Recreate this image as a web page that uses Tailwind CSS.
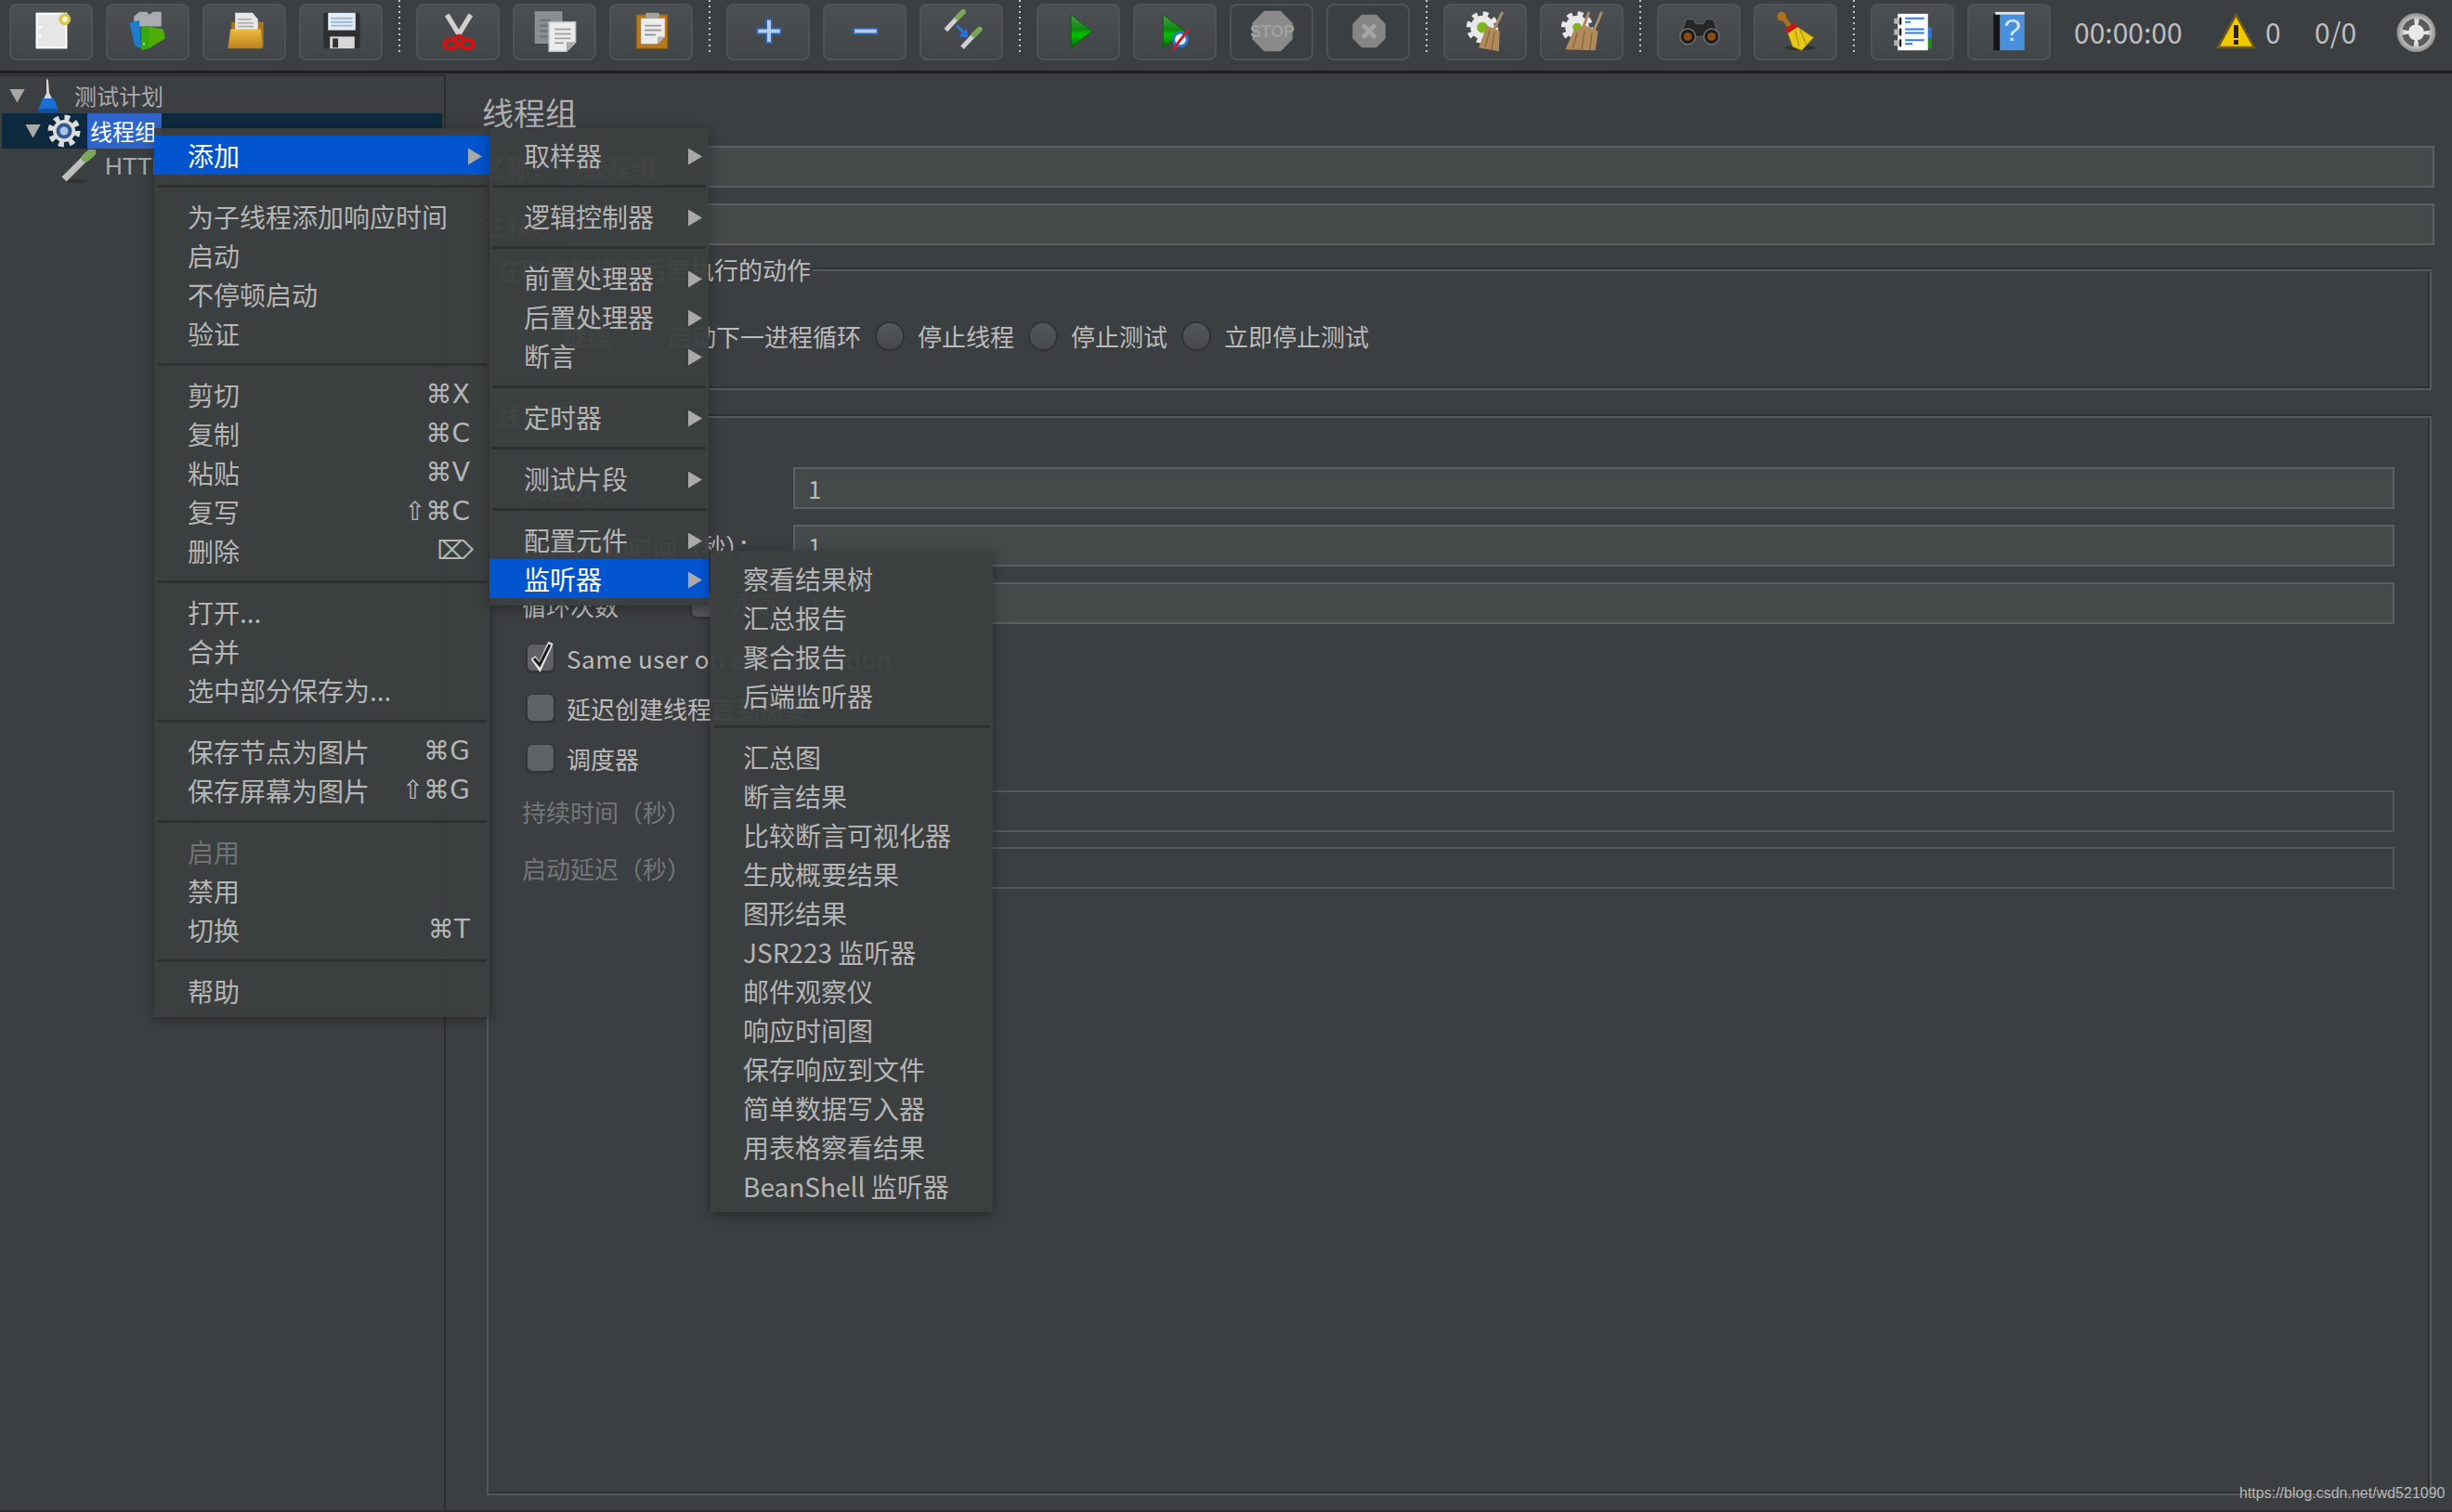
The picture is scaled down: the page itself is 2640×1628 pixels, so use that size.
<!DOCTYPE html>
<html lang="zh-CN">
<head>
<meta charset="UTF-8">
<title>Apache JMeter</title>
<script src="https://cdn.jsdelivr.net/npm/@tailwindcss/browser@4"></script>
</head>
<body class="bg-[#3c3f41]">
<div class="relative w-[2640px] h-[1628px] overflow-hidden flex flex-col bg-[#3c3f41] text-[#bbbbbb] text-[26px] border-b-2 border-[#2c2e30] font-['Noto_Sans_CJK_SC','Noto_Sans',sans-serif]">

  <svg class="absolute w-0 h-0">
    <defs>
      <linearGradient id="play" x1="0" y1="0" x2="0" y2="1"><stop offset="0" stop-color="#4f9f4f"/><stop offset="0.45" stop-color="#0a8a0a"/><stop offset="0.6" stop-color="#00c400"/><stop offset="1" stop-color="#006a00"/></linearGradient>
      <linearGradient id="folder" x1="0" y1="0" x2="0" y2="1"><stop offset="0" stop-color="#eebb44"/><stop offset="1" stop-color="#b9821c"/></linearGradient>
      <radialGradient id="ball"><stop offset="0.55" stop-color="#e8e8e8"/><stop offset="1" stop-color="#8a8a8a"/></radialGradient>
    </defs>
  </svg>

  <!-- toolbar -->
  <div class="h-[79px] shrink-0 flex items-start gap-[14px] pl-[10px] pt-[4px] border-b-[3px] border-[#1e1f20]">
    <div class="w-[90px] h-[61px] rounded-[8px] bg-linear-to-b from-[#4c5052] to-[#424547] shadow-[inset_0_0_0_2px_#505355]">
      <svg viewBox="0 0 90 62" class="w-full h-full"><rect x="29.5" y="11" width="32" height="37" fill="#e6e6e6" stroke="#fafafa" stroke-width="2.5"/><circle cx="33" cy="26" r="1.5" fill="#fff"/><circle cx="33" cy="35" r="1.5" fill="#fff"/><circle cx="60" cy="17" r="6.5" fill="#d8c850"/><circle cx="60" cy="17" r="3" fill="#fff7c0"/></svg>
    </div>
    <div class="w-[90px] h-[61px] rounded-[8px] bg-linear-to-b from-[#4c5052] to-[#424547] shadow-[inset_0_0_0_2px_#505355]">
      <svg viewBox="0 0 90 62" class="w-full h-full"><path d="M30 14l6-5h8l3 3 4-3h9v16H30z" fill="#a9adaf"/><path d="M25 21l11-3 2 31-7-3z" fill="#1b7dcc"/><path d="M38 26l8-2v25l-8 2z" fill="#35a812"/><path d="M46 25l16 3 2 10-18 11z" fill="#4fae06"/><circle cx="41" cy="44" r="1" fill="#fff"/></svg>
    </div>
    <div class="w-[90px] h-[61px] rounded-[8px] bg-linear-to-b from-[#4c5052] to-[#424547] shadow-[inset_0_0_0_2px_#505355]">
      <svg viewBox="0 0 90 62" class="w-full h-full"><path d="M31 20h35v27H31z" fill="#a9771a"/><path d="M35 10h19l6 7v14H35z" fill="#e6e6e6"/><path d="M38 17h15M38 21h17M38 25h17" stroke="#a8a8a8" stroke-width="1.5"/><path d="M30 28h33l2 21H27z" fill="url(#folder)"/></svg>
    </div>
    <div class="w-[90px] h-[61px] rounded-[8px] bg-linear-to-b from-[#4c5052] to-[#424547] shadow-[inset_0_0_0_2px_#505355]">
      <svg viewBox="0 0 90 62" class="w-full h-full"><rect x="26" y="10" width="40" height="39" rx="2" fill="#2f2f31"/><rect x="31" y="10" width="30" height="19" fill="#e4ecf5"/><path d="M34 16h24M34 20h24M34 24h24" stroke="#9db8d4" stroke-width="2"/><rect x="33" y="36" width="27" height="13" fill="#d8d8d8"/><rect x="36" y="38" width="6" height="10" fill="#333"/></svg>
    </div>
    <div class="w-[2px] h-[58px] -mt-[4px] mx-[3px] bg-[repeating-linear-gradient(to_bottom,#c4c4c4_0,#c4c4c4_2px,transparent_2px,transparent_6px)]"></div>
    <div class="w-[90px] h-[61px] rounded-[8px] bg-linear-to-b from-[#4c5052] to-[#424547] shadow-[inset_0_0_0_2px_#505355]">
      <svg viewBox="0 0 90 62" class="w-full h-full"><path d="M33 12l14 23M59 12L45 35" stroke="#cfcfcf" stroke-width="5.5"/><ellipse cx="37" cy="44" rx="7" ry="5" fill="none" stroke="#d41212" stroke-width="4.5"/><ellipse cx="55" cy="44" rx="7" ry="5" fill="none" stroke="#d41212" stroke-width="4.5"/><path d="M46 34l-7 7M46 34l7 7" stroke="#d41212" stroke-width="3.5"/></svg>
    </div>
    <div class="w-[90px] h-[61px] rounded-[8px] bg-linear-to-b from-[#4c5052] to-[#424547] shadow-[inset_0_0_0_2px_#505355]">
      <svg viewBox="0 0 90 62" class="w-full h-full"><rect x="24" y="9" width="29" height="34" fill="#8b8e90" stroke="#9a9d9f"/><path d="M29 18h12M29 24h12M29 30h12M29 36h12" stroke="#6d7072" stroke-width="2"/><path d="M39 20h29v22l-10 10H39z" fill="#ececec" stroke="#c4c4c4" stroke-width="1.5"/><path d="M58 52V42h10z" fill="#a8a8a8"/><path d="M45 28h18M45 33h18M45 38h18M45 43h10" stroke="#a5a5a5" stroke-width="2"/></svg>
    </div>
    <div class="w-[90px] h-[61px] rounded-[8px] bg-linear-to-b from-[#4c5052] to-[#424547] shadow-[inset_0_0_0_2px_#505355]">
      <svg viewBox="0 0 90 62" class="w-full h-full"><rect x="29" y="12" width="34" height="37" fill="#b57a1c" stroke="#8b5a12"/><path d="M34 16h26v20l-8 8H34z" fill="#ececec"/><path d="M52 44v-8h8z" fill="#b5b5b5"/><rect x="39" y="10" width="15" height="6" rx="2" fill="#a2a296"/><path d="M38 24h18M38 29h18M38 34h12" stroke="#9a9a9a" stroke-width="2"/></svg>
    </div>
    <div class="w-[2px] h-[58px] -mt-[4px] mx-[3px] bg-[repeating-linear-gradient(to_bottom,#c4c4c4_0,#c4c4c4_2px,transparent_2px,transparent_6px)]"></div>
    <div class="w-[90px] h-[61px] rounded-[8px] bg-linear-to-b from-[#4c5052] to-[#424547] shadow-[inset_0_0_0_2px_#505355]">
      <svg viewBox="0 0 90 62" class="w-full h-full"><path d="M42 16h8v10h10v8H50v10h-8V34H32v-8h10z" fill="#2f63a8"/><path d="M44 18h4v10h10v4H48v10h-4V32H34v-4h10z" fill="#b3cdea"/></svg>
    </div>
    <div class="w-[90px] h-[61px] rounded-[8px] bg-linear-to-b from-[#4c5052] to-[#424547] shadow-[inset_0_0_0_2px_#505355]">
      <svg viewBox="0 0 90 62" class="w-full h-full"><rect x="32" y="26" width="28" height="8" fill="#2f63a8"/><rect x="34" y="28" width="24" height="4" fill="#b3cdea"/></svg>
    </div>
    <div class="w-[90px] h-[61px] rounded-[8px] bg-linear-to-b from-[#4c5052] to-[#424547] shadow-[inset_0_0_0_2px_#505355]">
      <svg viewBox="0 0 90 62" class="w-full h-full"><path d="M28 29l13-14" stroke="#d0d0d0" stroke-width="5"/><path d="M41 15l6-6" stroke="#7aa85a" stroke-width="6" stroke-linecap="round"/><path d="M46 48l13-14" stroke="#d0d0d0" stroke-width="5"/><path d="M59 34l6-6" stroke="#7aa85a" stroke-width="6" stroke-linecap="round"/><path d="M40 24l7 7" stroke="#2a78e4" stroke-width="3"/><path d="M52 37l-10-1 9-9z" fill="#1f6fe8"/></svg>
    </div>
    <div class="w-[2px] h-[58px] -mt-[4px] mx-[3px] bg-[repeating-linear-gradient(to_bottom,#c4c4c4_0,#c4c4c4_2px,transparent_2px,transparent_6px)]"></div>
    <div class="w-[90px] h-[61px] rounded-[8px] bg-linear-to-b from-[#4c5052] to-[#424547] shadow-[inset_0_0_0_2px_#505355]">
      <svg viewBox="0 0 90 62" class="w-full h-full"><path d="M37 12l23 18-23 18z" fill="url(#play)" stroke="#0b5f0b"/></svg>
    </div>
    <div class="w-[90px] h-[61px] rounded-[8px] bg-linear-to-b from-[#4c5052] to-[#424547] shadow-[inset_0_0_0_2px_#505355]">
      <svg viewBox="0 0 90 62" class="w-full h-full"><path d="M32 12l24 18-24 18z" fill="url(#play)" stroke="#0b5f0b"/><circle cx="51" cy="39" r="7.5" fill="#f2f2f2" stroke="#2a78c8" stroke-width="3"/><path d="M43 50l17-22" stroke="#c41e2e" stroke-width="3"/></svg>
    </div>
    <div class="w-[90px] h-[61px] rounded-[8px] bg-[#3c3f41] shadow-[inset_0_0_0_2px_#505355]">
      <svg viewBox="0 0 90 62" class="w-full h-full"><path d="M37 8h18l13 13v18L55 52H37L24 39V21z" fill="#8a8a8a"/><text x="46" y="37" text-anchor="middle" font-size="18" font-weight="700" font-family="Liberation Sans" fill="#a0a0a0">STOP</text></svg>
    </div>
    <div class="w-[90px] h-[61px] rounded-[8px] bg-[#3c3f41] shadow-[inset_0_0_0_2px_#505355]">
      <svg viewBox="0 0 90 62" class="w-full h-full"><path d="M38 12h16l10 10v16L54 48H38L28 38V22z" fill="#858585"/><path d="M39 23l14 14M53 23L39 37" stroke="#a4a4a4" stroke-width="5"/></svg>
    </div>
    <div class="w-[2px] h-[58px] -mt-[4px] mx-[3px] bg-[repeating-linear-gradient(to_bottom,#c4c4c4_0,#c4c4c4_2px,transparent_2px,transparent_6px)]"></div>
    <div class="w-[90px] h-[61px] rounded-[8px] bg-linear-to-b from-[#4c5052] to-[#424547] shadow-[inset_0_0_0_2px_#505355]">
      <svg viewBox="0 0 90 62" class="w-full h-full"><circle cx="42" cy="26" r="13" fill="#e8e8e8"/><circle cx="42" cy="26" r="15" fill="none" stroke="#e8e8e8" stroke-width="5" stroke-dasharray="6 5.8"/><circle cx="42" cy="26" r="6" fill="#7ab81e"/><path d="M64 9L54 30" stroke="#a88c68" stroke-width="3"/><path d="M47 24l14 6-1 22-22-4z" fill="#b08a5a"/><path d="M50 29l-5 19M55 31l-3 20" stroke="#8c6a3e" stroke-width="1.5"/></svg>
    </div>
    <div class="w-[90px] h-[61px] rounded-[8px] bg-linear-to-b from-[#4c5052] to-[#424547] shadow-[inset_0_0_0_2px_#505355]">
      <svg viewBox="0 0 90 62" class="w-full h-full"><circle cx="40" cy="26" r="13" fill="#e8e8e8"/><circle cx="40" cy="26" r="15" fill="none" stroke="#e8e8e8" stroke-width="5" stroke-dasharray="6 5.8"/><circle cx="40" cy="26" r="5" fill="#7ab81e"/><path d="M53 9L46 28M67 9L58 30" stroke="#a88c68" stroke-width="3"/><path d="M37 28l12-4 14 6-3 21-33-1z" fill="#b08a5a"/><path d="M40 32l-5 17M48 30l-3 20M56 32l-2 19" stroke="#8c6a3e" stroke-width="1.5"/></svg>
    </div>
    <div class="w-[2px] h-[58px] -mt-[4px] mx-[3px] bg-[repeating-linear-gradient(to_bottom,#c4c4c4_0,#c4c4c4_2px,transparent_2px,transparent_6px)]"></div>
    <div class="w-[90px] h-[61px] rounded-[8px] bg-linear-to-b from-[#4c5052] to-[#424547] shadow-[inset_0_0_0_2px_#505355]">
      <svg viewBox="0 0 90 62" class="w-full h-full"><path d="M31 17h8l3 5h8l3-5h8l6 19H25z" fill="#262626" stroke="#666"/><circle cx="33" cy="36" r="8.5" fill="#1d1d1d" stroke="#707070" stroke-width="1.5"/><circle cx="59" cy="36" r="8.5" fill="#1d1d1d" stroke="#707070" stroke-width="1.5"/><circle cx="33" cy="36" r="4.5" fill="#8c4c18"/><circle cx="59" cy="36" r="4.5" fill="#8c4c18"/></svg>
    </div>
    <div class="w-[90px] h-[61px] rounded-[8px] bg-linear-to-b from-[#4c5052] to-[#424547] shadow-[inset_0_0_0_2px_#505355]">
      <svg viewBox="0 0 90 62" class="w-full h-full"><ellipse cx="50" cy="48" rx="16" ry="3" fill="#2e3032"/><path d="M30 13l9 12" stroke="#a9701f" stroke-width="5" stroke-linecap="round"/><circle cx="30" cy="14" r="5" fill="#a9701f"/><path d="M36 30l9-6 20 13-13 14-10-4z" fill="#e6c81a" stroke="#9a8414"/><path d="M45 30l4 17M50 28l7 17" stroke="#b89a10" stroke-width="1.5"/><path d="M35 30l11-7" stroke="#c81414" stroke-width="6"/></svg>
    </div>
    <div class="w-[2px] h-[58px] -mt-[4px] mx-[3px] bg-[repeating-linear-gradient(to_bottom,#c4c4c4_0,#c4c4c4_2px,transparent_2px,transparent_6px)]"></div>
    <div class="w-[90px] h-[61px] rounded-[8px] bg-linear-to-b from-[#4c5052] to-[#424547] shadow-[inset_0_0_0_2px_#505355]">
      <svg viewBox="0 0 90 62" class="w-full h-full"><rect x="62" y="26" width="4" height="12" fill="#2f78d8"/><rect x="62" y="38" width="4" height="11" fill="#1f8f1f"/><rect x="29" y="11" width="33" height="40" fill="#fff"/><path d="M37 16h21M37 20h6M37 28h21M37 32h21M37 40h21M37 44h8" stroke="#2a80e8" stroke-width="2"/><path d="M25 19h8M25 31h8M25 43h8" stroke="#b8b8b8" stroke-width="6"/><path d="M32 15v8M32 27v8M32 39v8" stroke="#111" stroke-width="2"/></svg>
    </div>
    <div class="w-[90px] h-[61px] rounded-[8px] bg-linear-to-b from-[#4c5052] to-[#424547] shadow-[inset_0_0_0_2px_#505355]">
      <svg viewBox="0 0 90 62" class="w-full h-full"><rect x="28" y="11" width="8" height="40" fill="#141414"/><rect x="30" y="9" width="32" height="3" fill="#e6e6e6"/><rect x="35" y="12" width="27" height="39" fill="#4a8fdc"/><text x="48.5" y="41" text-anchor="middle" font-size="34" font-family="Liberation Sans" fill="#d4e4f6">?</text></svg>
    </div>
    <div class="flex items-center h-[61px] ml-[11px] text-[#bdbdbd] text-[30px]">
      <span class="w-[111px] whitespace-nowrap">00:00:00</span>
      <svg viewBox="0 0 43 40" class="w-[43px] h-[40px] ml-[42px] -mt-[2px]"><path d="M21.500 2L41 37H2z" fill="#f2c800" stroke="#6e5c12" stroke-width="2.500"/><rect x="19" y="13" width="5" height="14" fill="#222"/><rect x="19" y="29" width="5" height="5" fill="#222"/></svg>
      <span class="w-[14px] ml-[10px]">0</span>
      <span class="w-[45px] ml-[39px] whitespace-nowrap">0/0</span>
      <svg viewBox="0 0 43 42" class="w-[43px] h-[42px] ml-[43px]"><circle cx="21.500" cy="21" r="21" fill="url(#ball)"/><circle cx="21.500" cy="21" r="12" fill="none" stroke="#5c5c5c" stroke-width="7" stroke-dasharray="14 4.850" stroke-dashoffset="-2.400"/></svg>
    </div>
  </div>

  <div class="flex-1 min-h-0 flex">
    <!-- tree -->
    <div class="w-[480px] shrink-0 mt-[1px] pt-[2px] border-r-2 border-t-2 border-[#2c2e30] text-[24px] text-[#a9a9a9]">
      <div class="h-[38px] flex items-center pl-[10px]">
        <div class="w-[17px] h-[15px] bg-[#a8a8a8] [clip-path:polygon(0_0,100%_0,50%_100%)]"></div>
        <svg viewBox="0 0 26 38" class="w-[26px] h-[38px] ml-[12px]"><path d="M11 0l2 3 1 13 9 18H3l8-18z" fill="#d6d6d6"/><path d="M7 22h12l5 13H2z" fill="#1a6fd4"/><ellipse cx="13" cy="35" rx="12" ry="2.500" fill="#1450a0"/></svg>
        <span class="ml-[15px]">测试计划</span>
      </div>
      <div class="h-[38px] mx-[2px] flex items-center pl-[25px] bg-[#0d293e]">
        <div class="w-[17px] h-[15px] bg-[#a8a8a8] [clip-path:polygon(0_0,100%_0,50%_100%)]"></div>
        <svg viewBox="0 0 36 36" class="w-[36px] h-[36px] ml-[7px]"><circle cx="18" cy="18" r="12" fill="#dcdcdc"/><circle cx="18" cy="18" r="14" fill="none" stroke="#dcdcdc" stroke-width="7" stroke-dasharray="5.500 5.500"/><circle cx="18" cy="18" r="8.500" fill="#32598f"/><circle cx="18" cy="18" r="4.500" fill="#a9c4e6"/></svg>
        <span class="ml-[7px] h-[38px] pl-[3px] w-[80px] bg-[#2f65ca] text-white leading-[38px]">线程组</span>
      </div>
      <div class="h-[38px] flex items-center pl-[66px]">
        <svg viewBox="0 0 38 36" class="w-[38px] h-[36px]"><ellipse cx="14" cy="34" rx="13" ry="2" fill="#303234"/><path d="M3 32l23-23" stroke="#bdbdbd" stroke-width="7"/><path d="M26 9l7-6" stroke="#7aa85a" stroke-width="9" stroke-linecap="round"/></svg>
        <span class="ml-[9px] font-['Liberation_Sans',sans-serif] text-[26px]">HTTP请求</span>
      </div>
    </div>

    <!-- thread group form -->
    <div class="flex-1 min-w-0 pl-[39px] pr-[19px]">
      <div class="h-[42px] mt-[21px] leading-[42px] text-[34px] text-[#aeaeae]">线程组</div>
      <div class="h-[45px] mt-[15px] flex items-center">
        <span class="w-[95px] shrink-0">名称：</span>
        <div class="flex-1 h-full flex items-center px-[12px] bg-[#45494a] border-2 border-[#5c5f61]">线程组</div>
      </div>
      <div class="h-[45px] mt-[17px] flex items-center">
        <span class="w-[95px] shrink-0">注释：</span>
        <div class="flex-1 h-full bg-[#45494a] border-2 border-[#5c5f61]"></div>
      </div>

      <div class="relative h-[130px] mt-[26px] ml-[5px] mr-[3px] pl-[37px] pt-[50px] border-2 border-[#56595b] shadow-[inset_-2px_-2px_0_#2f3133,0_-2px_0_#2f3133]">
        <span class="absolute left-[7px] -top-[19px] px-[2px] bg-[#3c3f41] leading-[34px]">在取样器错误后要执行的动作</span>
        <div class="flex items-center gap-[17px] -ml-[1px]">
          <div class="flex items-center gap-4"><span class="w-[28px] h-[28px] rounded-full bg-linear-to-b from-[#55585a] to-[#47494b] shadow-[0_0_0_2px_#303234]"></span>继续</div>
          <div class="flex items-center gap-4"><span class="w-[28px] h-[28px] rounded-full bg-linear-to-b from-[#55585a] to-[#47494b] shadow-[0_0_0_2px_#303234]"></span>启动下一进程循环</div>
          <div class="flex items-center gap-4"><span class="w-[28px] h-[28px] rounded-full bg-linear-to-b from-[#55585a] to-[#47494b] shadow-[0_0_0_2px_#303234]"></span>停止线程</div>
          <div class="flex items-center gap-4"><span class="w-[28px] h-[28px] rounded-full bg-linear-to-b from-[#55585a] to-[#47494b] shadow-[0_0_0_2px_#303234]"></span>停止测试</div>
          <div class="flex items-center gap-4"><span class="w-[28px] h-[28px] rounded-full bg-linear-to-b from-[#55585a] to-[#47494b] shadow-[0_0_0_2px_#303234]"></span>立即停止测试</div>
        </div>
      </div>

      <div class="relative h-[1162px] mt-[28px] ml-[5px] mr-[3px] pl-[36px] pr-[38px] pt-[53px] border-2 border-[#56595b] shadow-[inset_-2px_-2px_0_#2f3133,0_-2px_0_#2f3133]">
        <span class="absolute left-[7px] -top-[19px] px-[2px] bg-[#3c3f41] leading-[34px]">线程属性</span>
        <div class="grid grid-cols-[292px_1fr] auto-rows-[45px] gap-y-[17px] items-center">
          <span>线程数：</span>
          <div class="h-full flex items-center px-[14px] bg-[#45494a] border-2 border-[#5c5f61]">1</div>
          <span>Ramp-Up时间（秒）：</span>
          <div class="h-full flex items-center px-[14px] bg-[#45494a] border-2 border-[#5c5f61]">1</div>
          <div class="flex items-center">
            <span class="w-[183px] pt-[4px]">循环次数</span>
            <span class="w-[28px] h-[28px] rounded-[5px] bg-[#55585a] shadow-[0_1px_0_2px_#333537]"></span>
            <span class="ml-[15px]">永远</span>
          </div>
          <div class="h-full flex items-center px-[14px] bg-[#45494a] border-2 border-[#5c5f61]">1</div>
        </div>
        <div class="mt-[22px] flex flex-col gap-[26px] pl-[6px]">
          <div class="h-[28px] flex items-center gap-[14px]">
            <span class="w-[28px] h-[28px] rounded-[5px] bg-[#606365] shadow-[0_1px_0_2px_#333537]"><svg viewBox="0 0 28 28" class="w-[28px] h-[28px] overflow-visible"><path d="M6 14l7 10L25 -2" fill="none" stroke="#e4e4e4" stroke-width="6"/><path d="M7 15l6 7L24 0" fill="none" stroke="#1e1e1e" stroke-width="3"/></svg></span>
            <span class="tracking-[0.5px]">Same user on each iteration</span>
          </div>
          <div class="h-[28px] flex items-center gap-[14px]">
            <span class="w-[28px] h-[28px] rounded-[5px] bg-[#606365] shadow-[0_1px_0_2px_#333537]"></span>
            <span>延迟创建线程直到需要</span>
          </div>
          <div class="h-[28px] flex items-center gap-[14px]">
            <span class="w-[28px] h-[28px] rounded-[5px] bg-[#606365] shadow-[0_1px_0_2px_#333537]"></span>
            <span>调度器</span>
          </div>
        </div>
        <div class="mt-[21px] grid grid-cols-[292px_1fr] auto-rows-[45px] gap-y-[16px] items-center text-[#747779]">
          <span>持续时间（秒）</span>
          <div class="h-full border-2 border-[#55585a]"></div>
          <span>启动延迟（秒）</span>
          <div class="h-full border-2 border-[#55585a]"></div>
        </div>
      </div>
    </div>
  </div>

  <!-- context menu -->
  <div class="absolute left-[166px] top-[138px] w-[361px] pt-[8px] pb-[7px] bg-[#3c3f41]/[0.96] text-[28px] text-[#b5b5b5] shadow-[0_3px_12px_rgba(0,0,0,0.35)]">
    <div class="h-[42px] flex items-center justify-between pl-[36px] pr-[8px] bg-[#0055d4]/[0.97] text-white">添加<span class="mt-[3px] w-[15px] h-[18px] bg-[#a9a9a9] [clip-path:polygon(0_0,100%_50%,0_100%)]"></span></div>
    <div class="h-[24px] flex items-center px-[3px]"><div class="w-full h-[3px] bg-[#2e3032]"></div></div>
    <div class="h-[42px] flex items-center pl-[36px]">为子线程添加响应时间</div>
    <div class="h-[42px] flex items-center pl-[36px]">启动</div>
    <div class="h-[42px] flex items-center pl-[36px]">不停顿启动</div>
    <div class="h-[42px] flex items-center pl-[36px]">验证</div>
    <div class="h-[24px] flex items-center px-[3px]"><div class="w-full h-[3px] bg-[#2e3032]"></div></div>
    <div class="h-[42px] flex items-center justify-between pl-[36px] pr-[21px]">剪切<span class="font-['DejaVu_Sans',sans-serif] text-[28px]">⌘X</span></div>
    <div class="h-[42px] flex items-center justify-between pl-[36px] pr-[21px]">复制<span class="font-['DejaVu_Sans',sans-serif] text-[28px]">⌘C</span></div>
    <div class="h-[42px] flex items-center justify-between pl-[36px] pr-[21px]">粘贴<span class="font-['DejaVu_Sans',sans-serif] text-[28px]">⌘V</span></div>
    <div class="h-[42px] flex items-center justify-between pl-[36px] pr-[21px]">复写<span class="font-['DejaVu_Sans',sans-serif] text-[28px]">⇧⌘C</span></div>
    <div class="h-[42px] flex items-center justify-between pl-[36px] pr-[17px]">删除<span class="font-['DejaVu_Sans',sans-serif] text-[28px]">⌦</span></div>
    <div class="h-[24px] flex items-center px-[3px]"><div class="w-full h-[3px] bg-[#2e3032]"></div></div>
    <div class="h-[42px] flex items-center pl-[36px]">打开...</div>
    <div class="h-[42px] flex items-center pl-[36px]">合并</div>
    <div class="h-[42px] flex items-center pl-[36px]">选中部分保存为...</div>
    <div class="h-[24px] flex items-center px-[3px]"><div class="w-full h-[3px] bg-[#2e3032]"></div></div>
    <div class="h-[42px] flex items-center justify-between pl-[36px] pr-[21px]">保存节点为图片<span class="font-['DejaVu_Sans',sans-serif] text-[28px]">⌘G</span></div>
    <div class="h-[42px] flex items-center justify-between pl-[36px] pr-[21px]">保存屏幕为图片<span class="font-['DejaVu_Sans',sans-serif] text-[28px]">⇧⌘G</span></div>
    <div class="h-[24px] flex items-center px-[3px]"><div class="w-full h-[3px] bg-[#2e3032]"></div></div>
    <div class="h-[42px] flex items-center pl-[36px] text-[#707274]">启用</div>
    <div class="h-[42px] flex items-center pl-[36px]">禁用</div>
    <div class="h-[42px] flex items-center justify-between pl-[36px] pr-[21px]">切换<span class="font-['DejaVu_Sans',sans-serif] text-[28px]">⌘T</span></div>
    <div class="h-[24px] flex items-center px-[3px]"><div class="w-full h-[3px] bg-[#2e3032]"></div></div>
    <div class="h-[42px] flex items-center pl-[36px]">帮助</div>
  </div>

  <!-- add submenu -->
  <div class="absolute left-[527px] top-[138px] w-[236px] pt-[8px] pb-[8px] bg-[#3c3f41]/[0.96] text-[28px] text-[#b5b5b5] shadow-[0_3px_12px_rgba(0,0,0,0.35)]">
    <div class="h-[42px] flex items-center justify-between pl-[37px] pr-[7px]">取样器<span class="mt-[3px] w-[15px] h-[18px] bg-[#a9a9a9] [clip-path:polygon(0_0,100%_50%,0_100%)]"></span></div>
    <div class="h-[24px] flex items-center px-[3px]"><div class="w-full h-[3px] bg-[#2e3032]"></div></div>
    <div class="h-[42px] flex items-center justify-between pl-[37px] pr-[7px]">逻辑控制器<span class="mt-[3px] w-[15px] h-[18px] bg-[#a9a9a9] [clip-path:polygon(0_0,100%_50%,0_100%)]"></span></div>
    <div class="h-[24px] flex items-center px-[3px]"><div class="w-full h-[3px] bg-[#2e3032]"></div></div>
    <div class="h-[42px] flex items-center justify-between pl-[37px] pr-[7px]">前置处理器<span class="mt-[3px] w-[15px] h-[18px] bg-[#a9a9a9] [clip-path:polygon(0_0,100%_50%,0_100%)]"></span></div>
    <div class="h-[42px] flex items-center justify-between pl-[37px] pr-[7px]">后置处理器<span class="mt-[3px] w-[15px] h-[18px] bg-[#a9a9a9] [clip-path:polygon(0_0,100%_50%,0_100%)]"></span></div>
    <div class="h-[42px] flex items-center justify-between pl-[37px] pr-[7px]">断言<span class="mt-[3px] w-[15px] h-[18px] bg-[#a9a9a9] [clip-path:polygon(0_0,100%_50%,0_100%)]"></span></div>
    <div class="h-[24px] flex items-center px-[3px]"><div class="w-full h-[3px] bg-[#2e3032]"></div></div>
    <div class="h-[42px] flex items-center justify-between pl-[37px] pr-[7px]">定时器<span class="mt-[3px] w-[15px] h-[18px] bg-[#a9a9a9] [clip-path:polygon(0_0,100%_50%,0_100%)]"></span></div>
    <div class="h-[24px] flex items-center px-[3px]"><div class="w-full h-[3px] bg-[#2e3032]"></div></div>
    <div class="h-[42px] flex items-center justify-between pl-[37px] pr-[7px]">测试片段<span class="mt-[3px] w-[15px] h-[18px] bg-[#a9a9a9] [clip-path:polygon(0_0,100%_50%,0_100%)]"></span></div>
    <div class="h-[24px] flex items-center px-[3px]"><div class="w-full h-[3px] bg-[#2e3032]"></div></div>
    <div class="h-[42px] flex items-center justify-between pl-[37px] pr-[7px]">配置元件<span class="mt-[3px] w-[15px] h-[18px] bg-[#a9a9a9] [clip-path:polygon(0_0,100%_50%,0_100%)]"></span></div>
    <div class="h-[42px] flex items-center justify-between pl-[37px] pr-[7px] bg-[#0055d4]/[0.97] text-white">监听器<span class="mt-[3px] w-[15px] h-[18px] bg-[#a9a9a9] [clip-path:polygon(0_0,100%_50%,0_100%)]"></span></div>
  </div>

  <!-- listener submenu -->
  <div class="absolute left-[765px] top-[593px] w-[304px] pt-[9px] pb-[7px] bg-[#3c3f41]/[0.96] text-[28px] text-[#b5b5b5] shadow-[0_3px_12px_rgba(0,0,0,0.35)]">
    <div class="h-[42px] flex items-center pl-[35px]">察看结果树</div>
    <div class="h-[42px] flex items-center pl-[35px]">汇总报告</div>
    <div class="h-[42px] flex items-center pl-[35px]">聚合报告</div>
    <div class="h-[42px] flex items-center pl-[35px]">后端监听器</div>
    <div class="h-[24px] flex items-center px-[3px]"><div class="w-full h-[3px] bg-[#2e3032]"></div></div>
    <div class="h-[42px] flex items-center pl-[35px]">汇总图</div>
    <div class="h-[42px] flex items-center pl-[35px]">断言结果</div>
    <div class="h-[42px] flex items-center pl-[35px]">比较断言可视化器</div>
    <div class="h-[42px] flex items-center pl-[35px]">生成概要结果</div>
    <div class="h-[42px] flex items-center pl-[35px]">图形结果</div>
    <div class="h-[42px] flex items-center pl-[35px]">JSR223 监听器</div>
    <div class="h-[42px] flex items-center pl-[35px]">邮件观察仪</div>
    <div class="h-[42px] flex items-center pl-[35px]">响应时间图</div>
    <div class="h-[42px] flex items-center pl-[35px]">保存响应到文件</div>
    <div class="h-[42px] flex items-center pl-[35px]">简单数据写入器</div>
    <div class="h-[42px] flex items-center pl-[35px]">用表格察看结果</div>
    <div class="h-[42px] flex items-center pl-[35px]">BeanShell 监听器</div>
  </div>

  <span class="absolute left-[2411px] top-[1597px] text-[16px] leading-[22px] text-[#b8b8b8] font-['Liberation_Sans',sans-serif]">https://blog.csdn.net/wd521090</span>
</div>
</body>
</html>
